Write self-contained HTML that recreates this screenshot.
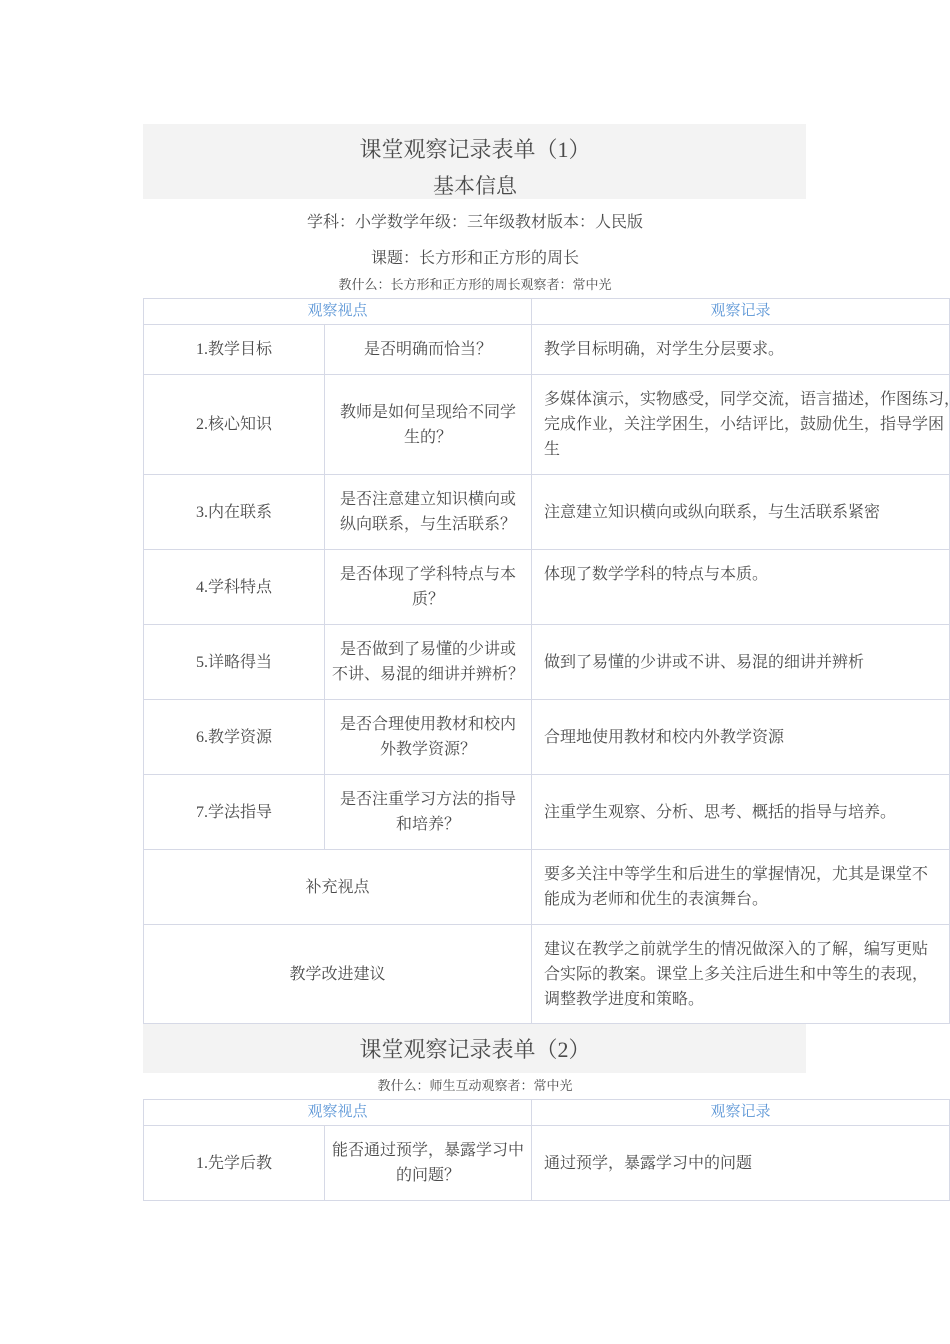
<!DOCTYPE html>
<html><head><meta charset="utf-8"><style>
body{margin:0;width:950px;height:1344px;background:#fff;position:relative;font-family:"Liberation Serif","Noto Serif CJK SC",serif;color:#4a4a4a;overflow:hidden}
.band{position:absolute;left:143px;width:663px;background:#f3f3f3}
.c{position:absolute;text-align:center;white-space:nowrap}
.t{position:absolute;border:1px solid #d6d9e6;box-sizing:border-box;display:flex;align-items:center;font-size:16px;line-height:25px}
.ctr{justify-content:center;text-align:center}
.m{padding:0 12px}
.l{padding:0 2px 0 12px}
.nw{white-space:nowrap}
.h{color:#5a95d6;font-size:15px}
</style></head><body>
<div class="band" style="top:124px;height:75px"></div>
<div class="c" style="left:0;width:950px;top:136px;font-size:22px;line-height:28px">课堂观察记录表单（1）</div>
<div class="c" style="left:0;width:950px;top:172px;font-size:21px;line-height:28px">基本信息</div>
<div class="c" style="left:0;width:950px;top:212px;font-size:16px;line-height:22px">学科：小学数学年级：三年级教材版本：人民版</div>
<div class="c" style="left:0;width:950px;top:248px;font-size:16px;line-height:22px">课题：长方形和正方形的周长</div>
<div class="c" style="left:0;width:950px;top:276px;font-size:13px;line-height:17px">教什么：长方形和正方形的周长观察者：常中光</div>

<div class="t ctr h" style="left:143px;top:298px;width:389px;height:27px">观察视点</div>
<div class="t ctr h" style="left:531px;top:298px;width:419px;height:27px">观察记录</div>

<div class="t ctr" style="left:143px;top:324px;width:182px;height:51px">1.教学目标</div>
<div class="t ctr m" style="left:324px;top:324px;width:208px;height:51px">是否明确而恰当？</div>
<div class="t l" style="left:531px;top:324px;width:419px;height:51px">教学目标明确，对学生分层要求。</div>

<div class="t ctr" style="left:143px;top:374px;width:182px;height:101px">2.核心知识</div>
<div class="t ctr m" style="left:324px;top:374px;width:208px;height:101px">教师是如何呈现给不同学生的？</div>
<div class="t l nw" style="left:531px;top:374px;width:419px;height:101px"><div>多媒体演示，实物感受，同学交流，语言描述，作图练习，<br>完成作业，关注学困生，小结评比，鼓励优生，指导学困<br>生</div></div>

<div class="t ctr" style="left:143px;top:474px;width:182px;height:76px">3.内在联系</div>
<div class="t ctr m" style="left:324px;top:474px;width:208px;height:76px">是否注意建立知识横向或纵向联系，与生活联系？</div>
<div class="t l" style="left:531px;top:474px;width:419px;height:76px">注意建立知识横向或纵向联系，与生活联系紧密</div>

<div class="t ctr" style="left:143px;top:549px;width:182px;height:76px">4.学科特点</div>
<div class="t ctr m" style="left:324px;top:549px;width:208px;height:76px">是否体现了学科特点与本质？</div>
<div class="t l" style="left:531px;top:549px;width:419px;height:76px;align-items:flex-start;padding-top:12px">体现了数学学科的特点与本质。</div>

<div class="t ctr" style="left:143px;top:624px;width:182px;height:76px">5.详略得当</div>
<div class="t ctr nw" style="left:324px;top:624px;width:208px;height:76px"><div>是否做到了易懂的少讲或<br>不讲、易混的细讲并辨析？</div></div>
<div class="t l" style="left:531px;top:624px;width:419px;height:76px">做到了易懂的少讲或不讲、易混的细讲并辨析</div>

<div class="t ctr" style="left:143px;top:699px;width:182px;height:76px">6.教学资源</div>
<div class="t ctr m" style="left:324px;top:699px;width:208px;height:76px">是否合理使用教材和校内外教学资源？</div>
<div class="t l" style="left:531px;top:699px;width:419px;height:76px">合理地使用教材和校内外教学资源</div>

<div class="t ctr" style="left:143px;top:774px;width:182px;height:76px">7.学法指导</div>
<div class="t ctr m" style="left:324px;top:774px;width:208px;height:76px">是否注重学习方法的指导和培养？</div>
<div class="t l" style="left:531px;top:774px;width:419px;height:76px">注重学生观察、分析、思考、概括的指导与培养。</div>

<div class="t ctr" style="left:143px;top:849px;width:389px;height:76px">补充视点</div>
<div class="t l nw" style="left:531px;top:849px;width:419px;height:76px"><div>要多关注中等学生和后进生的掌握情况，尤其是课堂不<br>能成为老师和优生的表演舞台。</div></div>

<div class="t ctr" style="left:143px;top:924px;width:389px;height:100px">教学改进建议</div>
<div class="t l nw" style="left:531px;top:924px;width:419px;height:100px"><div>建议在教学之前就学生的情况做深入的了解，编写更贴<br>合实际的教案。课堂上多关注后进生和中等生的表现，<br>调整教学进度和策略。</div></div>

<div class="band" style="top:1024px;height:49px"></div>
<div class="c" style="left:0;width:950px;top:1036px;font-size:22px;line-height:28px">课堂观察记录表单（2）</div>
<div class="c" style="left:0;width:950px;top:1077px;font-size:13px;line-height:17px">教什么：师生互动观察者：常中光</div>

<div class="t ctr h" style="left:143px;top:1099px;width:389px;height:27px">观察视点</div>
<div class="t ctr h" style="left:531px;top:1099px;width:419px;height:27px">观察记录</div>
<div class="t ctr" style="left:143px;top:1125px;width:182px;height:76px">1.先学后教</div>
<div class="t ctr nw" style="left:324px;top:1125px;width:208px;height:76px"><div>能否通过预学，暴露学习中<br>的问题？</div></div>
<div class="t l" style="left:531px;top:1125px;width:419px;height:76px">通过预学，暴露学习中的问题</div>
</body></html>
